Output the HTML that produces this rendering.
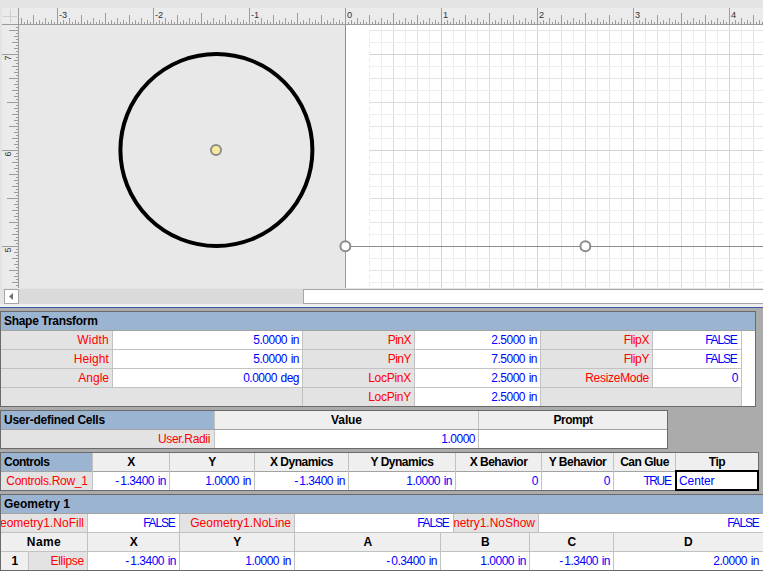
<!DOCTYPE html>
<html><head><meta charset="utf-8"><style>
html,body{margin:0;padding:0;width:763px;height:571px;overflow:hidden;background:#ababab}
#root{position:relative;width:763px;height:571px;overflow:hidden;font-family:"Liberation Sans",sans-serif}
#sheet div{position:absolute}
.t{height:18px;line-height:18px;white-space:nowrap;overflow:hidden}
.hb{font-weight:bold;font-size:12px;letter-spacing:-0.5px;color:#000}
.lb{font-size:12px;color:#ff0000}
.vb{font-size:12px;letter-spacing:-0.5px;word-spacing:0.8px;color:#0000ff}
.clip{direction:rtl}
</style></head><body><div id="root">
<svg width="763" height="308" viewBox="0 0 763 308" shape-rendering="crispEdges" style="position:absolute;left:0;top:0" font-family="Liberation Sans, sans-serif"><rect x="0" y="0" width="763" height="307" fill="#e4e4e4"/><rect x="2" y="8" width="761" height="16" fill="#ebebeb"/><rect x="2" y="25" width="16" height="263" fill="#ebebeb"/><rect x="3" y="16" width="14" height="1" fill="#cfcfcf"/><rect x="10" y="9" width="1" height="14" fill="#cfcfcf"/><rect x="2" y="24" width="761" height="1" fill="#9c9c9c"/><rect x="18" y="8" width="1" height="280" fill="#9c9c9c"/><rect x="21" y="18" width="1" height="6" fill="#9c9c9c"/><rect x="24" y="22" width="1" height="2" fill="#9c9c9c"/><rect x="27" y="20" width="1" height="4" fill="#9c9c9c"/><rect x="30" y="22" width="1" height="2" fill="#9c9c9c"/><rect x="33" y="15" width="1" height="9" fill="#9c9c9c"/><rect x="36" y="22" width="1" height="2" fill="#9c9c9c"/><rect x="39" y="20" width="1" height="4" fill="#9c9c9c"/><rect x="42" y="22" width="1" height="2" fill="#9c9c9c"/><rect x="45" y="18" width="1" height="6" fill="#9c9c9c"/><rect x="48" y="22" width="1" height="2" fill="#9c9c9c"/><rect x="51" y="20" width="1" height="4" fill="#9c9c9c"/><rect x="54" y="22" width="1" height="2" fill="#9c9c9c"/><rect x="57" y="8" width="1" height="16" fill="#9c9c9c"/><rect x="60" y="22" width="1" height="2" fill="#9c9c9c"/><rect x="63" y="20" width="1" height="4" fill="#9c9c9c"/><rect x="66" y="22" width="1" height="2" fill="#9c9c9c"/><rect x="69" y="18" width="1" height="6" fill="#9c9c9c"/><rect x="72" y="22" width="1" height="2" fill="#9c9c9c"/><rect x="75" y="20" width="1" height="4" fill="#9c9c9c"/><rect x="78" y="22" width="1" height="2" fill="#9c9c9c"/><rect x="81" y="15" width="1" height="9" fill="#9c9c9c"/><rect x="84" y="22" width="1" height="2" fill="#9c9c9c"/><rect x="87" y="20" width="1" height="4" fill="#9c9c9c"/><rect x="90" y="22" width="1" height="2" fill="#9c9c9c"/><rect x="93" y="18" width="1" height="6" fill="#9c9c9c"/><rect x="96" y="22" width="1" height="2" fill="#9c9c9c"/><rect x="99" y="20" width="1" height="4" fill="#9c9c9c"/><rect x="102" y="22" width="1" height="2" fill="#9c9c9c"/><rect x="105" y="13" width="1" height="11" fill="#9c9c9c"/><rect x="108" y="22" width="1" height="2" fill="#9c9c9c"/><rect x="111" y="20" width="1" height="4" fill="#9c9c9c"/><rect x="114" y="22" width="1" height="2" fill="#9c9c9c"/><rect x="117" y="18" width="1" height="6" fill="#9c9c9c"/><rect x="120" y="22" width="1" height="2" fill="#9c9c9c"/><rect x="123" y="20" width="1" height="4" fill="#9c9c9c"/><rect x="126" y="22" width="1" height="2" fill="#9c9c9c"/><rect x="129" y="15" width="1" height="9" fill="#9c9c9c"/><rect x="132" y="22" width="1" height="2" fill="#9c9c9c"/><rect x="135" y="20" width="1" height="4" fill="#9c9c9c"/><rect x="138" y="22" width="1" height="2" fill="#9c9c9c"/><rect x="141" y="18" width="1" height="6" fill="#9c9c9c"/><rect x="144" y="22" width="1" height="2" fill="#9c9c9c"/><rect x="147" y="20" width="1" height="4" fill="#9c9c9c"/><rect x="150" y="22" width="1" height="2" fill="#9c9c9c"/><rect x="153" y="8" width="1" height="16" fill="#9c9c9c"/><rect x="156" y="22" width="1" height="2" fill="#9c9c9c"/><rect x="159" y="20" width="1" height="4" fill="#9c9c9c"/><rect x="162" y="22" width="1" height="2" fill="#9c9c9c"/><rect x="165" y="18" width="1" height="6" fill="#9c9c9c"/><rect x="168" y="22" width="1" height="2" fill="#9c9c9c"/><rect x="171" y="20" width="1" height="4" fill="#9c9c9c"/><rect x="174" y="22" width="1" height="2" fill="#9c9c9c"/><rect x="177" y="15" width="1" height="9" fill="#9c9c9c"/><rect x="180" y="22" width="1" height="2" fill="#9c9c9c"/><rect x="183" y="20" width="1" height="4" fill="#9c9c9c"/><rect x="186" y="22" width="1" height="2" fill="#9c9c9c"/><rect x="189" y="18" width="1" height="6" fill="#9c9c9c"/><rect x="192" y="22" width="1" height="2" fill="#9c9c9c"/><rect x="195" y="20" width="1" height="4" fill="#9c9c9c"/><rect x="198" y="22" width="1" height="2" fill="#9c9c9c"/><rect x="201" y="13" width="1" height="11" fill="#9c9c9c"/><rect x="204" y="22" width="1" height="2" fill="#9c9c9c"/><rect x="207" y="20" width="1" height="4" fill="#9c9c9c"/><rect x="210" y="22" width="1" height="2" fill="#9c9c9c"/><rect x="213" y="18" width="1" height="6" fill="#9c9c9c"/><rect x="216" y="22" width="1" height="2" fill="#9c9c9c"/><rect x="219" y="20" width="1" height="4" fill="#9c9c9c"/><rect x="222" y="22" width="1" height="2" fill="#9c9c9c"/><rect x="225" y="15" width="1" height="9" fill="#9c9c9c"/><rect x="228" y="22" width="1" height="2" fill="#9c9c9c"/><rect x="231" y="20" width="1" height="4" fill="#9c9c9c"/><rect x="234" y="22" width="1" height="2" fill="#9c9c9c"/><rect x="237" y="18" width="1" height="6" fill="#9c9c9c"/><rect x="240" y="22" width="1" height="2" fill="#9c9c9c"/><rect x="243" y="20" width="1" height="4" fill="#9c9c9c"/><rect x="246" y="22" width="1" height="2" fill="#9c9c9c"/><rect x="249" y="8" width="1" height="16" fill="#9c9c9c"/><rect x="252" y="22" width="1" height="2" fill="#9c9c9c"/><rect x="255" y="20" width="1" height="4" fill="#9c9c9c"/><rect x="258" y="22" width="1" height="2" fill="#9c9c9c"/><rect x="261" y="18" width="1" height="6" fill="#9c9c9c"/><rect x="264" y="22" width="1" height="2" fill="#9c9c9c"/><rect x="267" y="20" width="1" height="4" fill="#9c9c9c"/><rect x="270" y="22" width="1" height="2" fill="#9c9c9c"/><rect x="273" y="15" width="1" height="9" fill="#9c9c9c"/><rect x="276" y="22" width="1" height="2" fill="#9c9c9c"/><rect x="279" y="20" width="1" height="4" fill="#9c9c9c"/><rect x="282" y="22" width="1" height="2" fill="#9c9c9c"/><rect x="285" y="18" width="1" height="6" fill="#9c9c9c"/><rect x="288" y="22" width="1" height="2" fill="#9c9c9c"/><rect x="291" y="20" width="1" height="4" fill="#9c9c9c"/><rect x="294" y="22" width="1" height="2" fill="#9c9c9c"/><rect x="297" y="13" width="1" height="11" fill="#9c9c9c"/><rect x="300" y="22" width="1" height="2" fill="#9c9c9c"/><rect x="303" y="20" width="1" height="4" fill="#9c9c9c"/><rect x="306" y="22" width="1" height="2" fill="#9c9c9c"/><rect x="309" y="18" width="1" height="6" fill="#9c9c9c"/><rect x="312" y="22" width="1" height="2" fill="#9c9c9c"/><rect x="315" y="20" width="1" height="4" fill="#9c9c9c"/><rect x="318" y="22" width="1" height="2" fill="#9c9c9c"/><rect x="321" y="15" width="1" height="9" fill="#9c9c9c"/><rect x="324" y="22" width="1" height="2" fill="#9c9c9c"/><rect x="327" y="20" width="1" height="4" fill="#9c9c9c"/><rect x="330" y="22" width="1" height="2" fill="#9c9c9c"/><rect x="333" y="18" width="1" height="6" fill="#9c9c9c"/><rect x="336" y="22" width="1" height="2" fill="#9c9c9c"/><rect x="339" y="20" width="1" height="4" fill="#9c9c9c"/><rect x="342" y="22" width="1" height="2" fill="#9c9c9c"/><rect x="345" y="8" width="1" height="16" fill="#9c9c9c"/><rect x="348" y="22" width="1" height="2" fill="#9c9c9c"/><rect x="351" y="20" width="1" height="4" fill="#9c9c9c"/><rect x="354" y="22" width="1" height="2" fill="#9c9c9c"/><rect x="357" y="18" width="1" height="6" fill="#9c9c9c"/><rect x="360" y="22" width="1" height="2" fill="#9c9c9c"/><rect x="363" y="20" width="1" height="4" fill="#9c9c9c"/><rect x="366" y="22" width="1" height="2" fill="#9c9c9c"/><rect x="369" y="15" width="1" height="9" fill="#9c9c9c"/><rect x="372" y="22" width="1" height="2" fill="#9c9c9c"/><rect x="375" y="20" width="1" height="4" fill="#9c9c9c"/><rect x="378" y="22" width="1" height="2" fill="#9c9c9c"/><rect x="381" y="18" width="1" height="6" fill="#9c9c9c"/><rect x="384" y="22" width="1" height="2" fill="#9c9c9c"/><rect x="387" y="20" width="1" height="4" fill="#9c9c9c"/><rect x="390" y="22" width="1" height="2" fill="#9c9c9c"/><rect x="393" y="13" width="1" height="11" fill="#9c9c9c"/><rect x="396" y="22" width="1" height="2" fill="#9c9c9c"/><rect x="399" y="20" width="1" height="4" fill="#9c9c9c"/><rect x="402" y="22" width="1" height="2" fill="#9c9c9c"/><rect x="405" y="18" width="1" height="6" fill="#9c9c9c"/><rect x="408" y="22" width="1" height="2" fill="#9c9c9c"/><rect x="411" y="20" width="1" height="4" fill="#9c9c9c"/><rect x="414" y="22" width="1" height="2" fill="#9c9c9c"/><rect x="417" y="15" width="1" height="9" fill="#9c9c9c"/><rect x="420" y="22" width="1" height="2" fill="#9c9c9c"/><rect x="423" y="20" width="1" height="4" fill="#9c9c9c"/><rect x="426" y="22" width="1" height="2" fill="#9c9c9c"/><rect x="429" y="18" width="1" height="6" fill="#9c9c9c"/><rect x="432" y="22" width="1" height="2" fill="#9c9c9c"/><rect x="435" y="20" width="1" height="4" fill="#9c9c9c"/><rect x="438" y="22" width="1" height="2" fill="#9c9c9c"/><rect x="441" y="8" width="1" height="16" fill="#9c9c9c"/><rect x="444" y="22" width="1" height="2" fill="#9c9c9c"/><rect x="447" y="20" width="1" height="4" fill="#9c9c9c"/><rect x="450" y="22" width="1" height="2" fill="#9c9c9c"/><rect x="453" y="18" width="1" height="6" fill="#9c9c9c"/><rect x="456" y="22" width="1" height="2" fill="#9c9c9c"/><rect x="459" y="20" width="1" height="4" fill="#9c9c9c"/><rect x="462" y="22" width="1" height="2" fill="#9c9c9c"/><rect x="465" y="15" width="1" height="9" fill="#9c9c9c"/><rect x="468" y="22" width="1" height="2" fill="#9c9c9c"/><rect x="471" y="20" width="1" height="4" fill="#9c9c9c"/><rect x="474" y="22" width="1" height="2" fill="#9c9c9c"/><rect x="477" y="18" width="1" height="6" fill="#9c9c9c"/><rect x="480" y="22" width="1" height="2" fill="#9c9c9c"/><rect x="483" y="20" width="1" height="4" fill="#9c9c9c"/><rect x="486" y="22" width="1" height="2" fill="#9c9c9c"/><rect x="489" y="13" width="1" height="11" fill="#9c9c9c"/><rect x="492" y="22" width="1" height="2" fill="#9c9c9c"/><rect x="495" y="20" width="1" height="4" fill="#9c9c9c"/><rect x="498" y="22" width="1" height="2" fill="#9c9c9c"/><rect x="501" y="18" width="1" height="6" fill="#9c9c9c"/><rect x="504" y="22" width="1" height="2" fill="#9c9c9c"/><rect x="507" y="20" width="1" height="4" fill="#9c9c9c"/><rect x="510" y="22" width="1" height="2" fill="#9c9c9c"/><rect x="513" y="15" width="1" height="9" fill="#9c9c9c"/><rect x="516" y="22" width="1" height="2" fill="#9c9c9c"/><rect x="519" y="20" width="1" height="4" fill="#9c9c9c"/><rect x="522" y="22" width="1" height="2" fill="#9c9c9c"/><rect x="525" y="18" width="1" height="6" fill="#9c9c9c"/><rect x="528" y="22" width="1" height="2" fill="#9c9c9c"/><rect x="531" y="20" width="1" height="4" fill="#9c9c9c"/><rect x="534" y="22" width="1" height="2" fill="#9c9c9c"/><rect x="537" y="8" width="1" height="16" fill="#9c9c9c"/><rect x="540" y="22" width="1" height="2" fill="#9c9c9c"/><rect x="543" y="20" width="1" height="4" fill="#9c9c9c"/><rect x="546" y="22" width="1" height="2" fill="#9c9c9c"/><rect x="549" y="18" width="1" height="6" fill="#9c9c9c"/><rect x="552" y="22" width="1" height="2" fill="#9c9c9c"/><rect x="555" y="20" width="1" height="4" fill="#9c9c9c"/><rect x="558" y="22" width="1" height="2" fill="#9c9c9c"/><rect x="561" y="15" width="1" height="9" fill="#9c9c9c"/><rect x="564" y="22" width="1" height="2" fill="#9c9c9c"/><rect x="567" y="20" width="1" height="4" fill="#9c9c9c"/><rect x="570" y="22" width="1" height="2" fill="#9c9c9c"/><rect x="573" y="18" width="1" height="6" fill="#9c9c9c"/><rect x="576" y="22" width="1" height="2" fill="#9c9c9c"/><rect x="579" y="20" width="1" height="4" fill="#9c9c9c"/><rect x="582" y="22" width="1" height="2" fill="#9c9c9c"/><rect x="585" y="13" width="1" height="11" fill="#9c9c9c"/><rect x="588" y="22" width="1" height="2" fill="#9c9c9c"/><rect x="591" y="20" width="1" height="4" fill="#9c9c9c"/><rect x="594" y="22" width="1" height="2" fill="#9c9c9c"/><rect x="597" y="18" width="1" height="6" fill="#9c9c9c"/><rect x="600" y="22" width="1" height="2" fill="#9c9c9c"/><rect x="603" y="20" width="1" height="4" fill="#9c9c9c"/><rect x="606" y="22" width="1" height="2" fill="#9c9c9c"/><rect x="609" y="15" width="1" height="9" fill="#9c9c9c"/><rect x="612" y="22" width="1" height="2" fill="#9c9c9c"/><rect x="615" y="20" width="1" height="4" fill="#9c9c9c"/><rect x="618" y="22" width="1" height="2" fill="#9c9c9c"/><rect x="621" y="18" width="1" height="6" fill="#9c9c9c"/><rect x="624" y="22" width="1" height="2" fill="#9c9c9c"/><rect x="627" y="20" width="1" height="4" fill="#9c9c9c"/><rect x="630" y="22" width="1" height="2" fill="#9c9c9c"/><rect x="633" y="8" width="1" height="16" fill="#9c9c9c"/><rect x="636" y="22" width="1" height="2" fill="#9c9c9c"/><rect x="639" y="20" width="1" height="4" fill="#9c9c9c"/><rect x="642" y="22" width="1" height="2" fill="#9c9c9c"/><rect x="645" y="18" width="1" height="6" fill="#9c9c9c"/><rect x="648" y="22" width="1" height="2" fill="#9c9c9c"/><rect x="651" y="20" width="1" height="4" fill="#9c9c9c"/><rect x="654" y="22" width="1" height="2" fill="#9c9c9c"/><rect x="657" y="15" width="1" height="9" fill="#9c9c9c"/><rect x="660" y="22" width="1" height="2" fill="#9c9c9c"/><rect x="663" y="20" width="1" height="4" fill="#9c9c9c"/><rect x="666" y="22" width="1" height="2" fill="#9c9c9c"/><rect x="669" y="18" width="1" height="6" fill="#9c9c9c"/><rect x="672" y="22" width="1" height="2" fill="#9c9c9c"/><rect x="675" y="20" width="1" height="4" fill="#9c9c9c"/><rect x="678" y="22" width="1" height="2" fill="#9c9c9c"/><rect x="681" y="13" width="1" height="11" fill="#9c9c9c"/><rect x="684" y="22" width="1" height="2" fill="#9c9c9c"/><rect x="687" y="20" width="1" height="4" fill="#9c9c9c"/><rect x="690" y="22" width="1" height="2" fill="#9c9c9c"/><rect x="693" y="18" width="1" height="6" fill="#9c9c9c"/><rect x="696" y="22" width="1" height="2" fill="#9c9c9c"/><rect x="699" y="20" width="1" height="4" fill="#9c9c9c"/><rect x="702" y="22" width="1" height="2" fill="#9c9c9c"/><rect x="705" y="15" width="1" height="9" fill="#9c9c9c"/><rect x="708" y="22" width="1" height="2" fill="#9c9c9c"/><rect x="711" y="20" width="1" height="4" fill="#9c9c9c"/><rect x="714" y="22" width="1" height="2" fill="#9c9c9c"/><rect x="717" y="18" width="1" height="6" fill="#9c9c9c"/><rect x="720" y="22" width="1" height="2" fill="#9c9c9c"/><rect x="723" y="20" width="1" height="4" fill="#9c9c9c"/><rect x="726" y="22" width="1" height="2" fill="#9c9c9c"/><rect x="729" y="8" width="1" height="16" fill="#9c9c9c"/><rect x="732" y="22" width="1" height="2" fill="#9c9c9c"/><rect x="735" y="20" width="1" height="4" fill="#9c9c9c"/><rect x="738" y="22" width="1" height="2" fill="#9c9c9c"/><rect x="741" y="18" width="1" height="6" fill="#9c9c9c"/><rect x="744" y="22" width="1" height="2" fill="#9c9c9c"/><rect x="747" y="20" width="1" height="4" fill="#9c9c9c"/><rect x="750" y="22" width="1" height="2" fill="#9c9c9c"/><rect x="753" y="15" width="1" height="9" fill="#9c9c9c"/><rect x="756" y="22" width="1" height="2" fill="#9c9c9c"/><rect x="759" y="20" width="1" height="4" fill="#9c9c9c"/><rect x="762" y="22" width="1" height="2" fill="#9c9c9c"/><rect x="16" y="27" width="2" height="1" fill="#9c9c9c"/><rect x="9" y="30" width="9" height="1" fill="#9c9c9c"/><rect x="16" y="33" width="2" height="1" fill="#9c9c9c"/><rect x="14" y="36" width="4" height="1" fill="#9c9c9c"/><rect x="16" y="39" width="2" height="1" fill="#9c9c9c"/><rect x="12" y="42" width="6" height="1" fill="#9c9c9c"/><rect x="16" y="45" width="2" height="1" fill="#9c9c9c"/><rect x="14" y="48" width="4" height="1" fill="#9c9c9c"/><rect x="16" y="51" width="2" height="1" fill="#9c9c9c"/><rect x="2" y="54" width="16" height="1" fill="#9c9c9c"/><rect x="16" y="57" width="2" height="1" fill="#9c9c9c"/><rect x="14" y="60" width="4" height="1" fill="#9c9c9c"/><rect x="16" y="63" width="2" height="1" fill="#9c9c9c"/><rect x="12" y="66" width="6" height="1" fill="#9c9c9c"/><rect x="16" y="69" width="2" height="1" fill="#9c9c9c"/><rect x="14" y="72" width="4" height="1" fill="#9c9c9c"/><rect x="16" y="75" width="2" height="1" fill="#9c9c9c"/><rect x="9" y="78" width="9" height="1" fill="#9c9c9c"/><rect x="16" y="81" width="2" height="1" fill="#9c9c9c"/><rect x="14" y="84" width="4" height="1" fill="#9c9c9c"/><rect x="16" y="87" width="2" height="1" fill="#9c9c9c"/><rect x="12" y="90" width="6" height="1" fill="#9c9c9c"/><rect x="16" y="93" width="2" height="1" fill="#9c9c9c"/><rect x="14" y="96" width="4" height="1" fill="#9c9c9c"/><rect x="16" y="99" width="2" height="1" fill="#9c9c9c"/><rect x="7" y="102" width="11" height="1" fill="#9c9c9c"/><rect x="16" y="105" width="2" height="1" fill="#9c9c9c"/><rect x="14" y="108" width="4" height="1" fill="#9c9c9c"/><rect x="16" y="111" width="2" height="1" fill="#9c9c9c"/><rect x="12" y="114" width="6" height="1" fill="#9c9c9c"/><rect x="16" y="117" width="2" height="1" fill="#9c9c9c"/><rect x="14" y="120" width="4" height="1" fill="#9c9c9c"/><rect x="16" y="123" width="2" height="1" fill="#9c9c9c"/><rect x="9" y="126" width="9" height="1" fill="#9c9c9c"/><rect x="16" y="129" width="2" height="1" fill="#9c9c9c"/><rect x="14" y="132" width="4" height="1" fill="#9c9c9c"/><rect x="16" y="135" width="2" height="1" fill="#9c9c9c"/><rect x="12" y="138" width="6" height="1" fill="#9c9c9c"/><rect x="16" y="141" width="2" height="1" fill="#9c9c9c"/><rect x="14" y="144" width="4" height="1" fill="#9c9c9c"/><rect x="16" y="147" width="2" height="1" fill="#9c9c9c"/><rect x="2" y="150" width="16" height="1" fill="#9c9c9c"/><rect x="16" y="153" width="2" height="1" fill="#9c9c9c"/><rect x="14" y="156" width="4" height="1" fill="#9c9c9c"/><rect x="16" y="159" width="2" height="1" fill="#9c9c9c"/><rect x="12" y="162" width="6" height="1" fill="#9c9c9c"/><rect x="16" y="165" width="2" height="1" fill="#9c9c9c"/><rect x="14" y="168" width="4" height="1" fill="#9c9c9c"/><rect x="16" y="171" width="2" height="1" fill="#9c9c9c"/><rect x="9" y="174" width="9" height="1" fill="#9c9c9c"/><rect x="16" y="177" width="2" height="1" fill="#9c9c9c"/><rect x="14" y="180" width="4" height="1" fill="#9c9c9c"/><rect x="16" y="183" width="2" height="1" fill="#9c9c9c"/><rect x="12" y="186" width="6" height="1" fill="#9c9c9c"/><rect x="16" y="189" width="2" height="1" fill="#9c9c9c"/><rect x="14" y="192" width="4" height="1" fill="#9c9c9c"/><rect x="16" y="195" width="2" height="1" fill="#9c9c9c"/><rect x="7" y="198" width="11" height="1" fill="#9c9c9c"/><rect x="16" y="201" width="2" height="1" fill="#9c9c9c"/><rect x="14" y="204" width="4" height="1" fill="#9c9c9c"/><rect x="16" y="207" width="2" height="1" fill="#9c9c9c"/><rect x="12" y="210" width="6" height="1" fill="#9c9c9c"/><rect x="16" y="213" width="2" height="1" fill="#9c9c9c"/><rect x="14" y="216" width="4" height="1" fill="#9c9c9c"/><rect x="16" y="219" width="2" height="1" fill="#9c9c9c"/><rect x="9" y="222" width="9" height="1" fill="#9c9c9c"/><rect x="16" y="225" width="2" height="1" fill="#9c9c9c"/><rect x="14" y="228" width="4" height="1" fill="#9c9c9c"/><rect x="16" y="231" width="2" height="1" fill="#9c9c9c"/><rect x="12" y="234" width="6" height="1" fill="#9c9c9c"/><rect x="16" y="237" width="2" height="1" fill="#9c9c9c"/><rect x="14" y="240" width="4" height="1" fill="#9c9c9c"/><rect x="16" y="243" width="2" height="1" fill="#9c9c9c"/><rect x="2" y="246" width="16" height="1" fill="#9c9c9c"/><rect x="16" y="249" width="2" height="1" fill="#9c9c9c"/><rect x="14" y="252" width="4" height="1" fill="#9c9c9c"/><rect x="16" y="255" width="2" height="1" fill="#9c9c9c"/><rect x="12" y="258" width="6" height="1" fill="#9c9c9c"/><rect x="16" y="261" width="2" height="1" fill="#9c9c9c"/><rect x="14" y="264" width="4" height="1" fill="#9c9c9c"/><rect x="16" y="267" width="2" height="1" fill="#9c9c9c"/><rect x="9" y="270" width="9" height="1" fill="#9c9c9c"/><rect x="16" y="273" width="2" height="1" fill="#9c9c9c"/><rect x="14" y="276" width="4" height="1" fill="#9c9c9c"/><rect x="16" y="279" width="2" height="1" fill="#9c9c9c"/><rect x="12" y="282" width="6" height="1" fill="#9c9c9c"/><rect x="16" y="285" width="2" height="1" fill="#9c9c9c"/><rect x="19" y="25" width="326" height="263" fill="#e8e8e8"/><rect x="346" y="25" width="417" height="263" fill="#ffffff"/><rect x="381" y="25" width="1" height="263" fill="#eeeeee"/><rect x="393" y="25" width="1" height="263" fill="#dcdcdc"/><rect x="405" y="25" width="1" height="263" fill="#eeeeee"/><rect x="417" y="25" width="1" height="263" fill="#e4e4e4"/><rect x="429" y="25" width="1" height="263" fill="#eeeeee"/><rect x="441" y="25" width="1" height="263" fill="#d4d4d4"/><rect x="453" y="25" width="1" height="263" fill="#eeeeee"/><rect x="465" y="25" width="1" height="263" fill="#e4e4e4"/><rect x="477" y="25" width="1" height="263" fill="#eeeeee"/><rect x="489" y="25" width="1" height="263" fill="#dcdcdc"/><rect x="501" y="25" width="1" height="263" fill="#eeeeee"/><rect x="513" y="25" width="1" height="263" fill="#e4e4e4"/><rect x="525" y="25" width="1" height="263" fill="#eeeeee"/><rect x="537" y="25" width="1" height="263" fill="#d4d4d4"/><rect x="549" y="25" width="1" height="263" fill="#eeeeee"/><rect x="561" y="25" width="1" height="263" fill="#e4e4e4"/><rect x="573" y="25" width="1" height="263" fill="#eeeeee"/><rect x="585" y="25" width="1" height="263" fill="#dcdcdc"/><rect x="597" y="25" width="1" height="263" fill="#eeeeee"/><rect x="609" y="25" width="1" height="263" fill="#e4e4e4"/><rect x="621" y="25" width="1" height="263" fill="#eeeeee"/><rect x="633" y="25" width="1" height="263" fill="#d4d4d4"/><rect x="645" y="25" width="1" height="263" fill="#eeeeee"/><rect x="657" y="25" width="1" height="263" fill="#e4e4e4"/><rect x="669" y="25" width="1" height="263" fill="#eeeeee"/><rect x="681" y="25" width="1" height="263" fill="#dcdcdc"/><rect x="693" y="25" width="1" height="263" fill="#eeeeee"/><rect x="705" y="25" width="1" height="263" fill="#e4e4e4"/><rect x="717" y="25" width="1" height="263" fill="#eeeeee"/><rect x="729" y="25" width="1" height="263" fill="#d4d4d4"/><rect x="741" y="25" width="1" height="263" fill="#eeeeee"/><rect x="753" y="25" width="1" height="263" fill="#e4e4e4"/><rect x="369" y="30" width="394" height="1" fill="#e4e4e4"/><rect x="369" y="42" width="394" height="1" fill="#eeeeee"/><rect x="369" y="54" width="394" height="1" fill="#d4d4d4"/><rect x="369" y="66" width="394" height="1" fill="#eeeeee"/><rect x="369" y="78" width="394" height="1" fill="#e4e4e4"/><rect x="369" y="90" width="394" height="1" fill="#eeeeee"/><rect x="369" y="102" width="394" height="1" fill="#dcdcdc"/><rect x="369" y="114" width="394" height="1" fill="#eeeeee"/><rect x="369" y="126" width="394" height="1" fill="#e4e4e4"/><rect x="369" y="138" width="394" height="1" fill="#eeeeee"/><rect x="369" y="150" width="394" height="1" fill="#d4d4d4"/><rect x="369" y="162" width="394" height="1" fill="#eeeeee"/><rect x="369" y="174" width="394" height="1" fill="#e4e4e4"/><rect x="369" y="186" width="394" height="1" fill="#eeeeee"/><rect x="369" y="198" width="394" height="1" fill="#dcdcdc"/><rect x="369" y="210" width="394" height="1" fill="#eeeeee"/><rect x="369" y="222" width="394" height="1" fill="#e4e4e4"/><rect x="369" y="234" width="394" height="1" fill="#eeeeee"/><rect x="369" y="246" width="394" height="1" fill="#d4d4d4"/><rect x="369" y="258" width="394" height="1" fill="#eeeeee"/><rect x="369" y="270" width="394" height="1" fill="#e4e4e4"/><rect x="369" y="282" width="394" height="1" fill="#eeeeee"/><rect x="369" y="25" width="1" height="2" fill="#ebebeb"/><rect x="369" y="30" width="1" height="4" fill="#ebebeb"/><rect x="369" y="37" width="1" height="4" fill="#ebebeb"/><rect x="369" y="44" width="1" height="4" fill="#ebebeb"/><rect x="369" y="51" width="1" height="4" fill="#ebebeb"/><rect x="369" y="58" width="1" height="4" fill="#ebebeb"/><rect x="369" y="65" width="1" height="4" fill="#ebebeb"/><rect x="369" y="72" width="1" height="4" fill="#ebebeb"/><rect x="369" y="79" width="1" height="4" fill="#ebebeb"/><rect x="369" y="86" width="1" height="4" fill="#ebebeb"/><rect x="369" y="93" width="1" height="4" fill="#ebebeb"/><rect x="369" y="100" width="1" height="4" fill="#ebebeb"/><rect x="369" y="107" width="1" height="4" fill="#ebebeb"/><rect x="369" y="114" width="1" height="4" fill="#ebebeb"/><rect x="369" y="121" width="1" height="4" fill="#ebebeb"/><rect x="369" y="128" width="1" height="4" fill="#ebebeb"/><rect x="369" y="135" width="1" height="4" fill="#ebebeb"/><rect x="369" y="142" width="1" height="4" fill="#ebebeb"/><rect x="369" y="149" width="1" height="4" fill="#ebebeb"/><rect x="369" y="156" width="1" height="4" fill="#ebebeb"/><rect x="369" y="163" width="1" height="4" fill="#ebebeb"/><rect x="369" y="170" width="1" height="4" fill="#ebebeb"/><rect x="369" y="177" width="1" height="4" fill="#ebebeb"/><rect x="369" y="184" width="1" height="4" fill="#ebebeb"/><rect x="369" y="191" width="1" height="4" fill="#ebebeb"/><rect x="369" y="198" width="1" height="4" fill="#ebebeb"/><rect x="369" y="205" width="1" height="4" fill="#ebebeb"/><rect x="369" y="212" width="1" height="4" fill="#ebebeb"/><rect x="369" y="219" width="1" height="4" fill="#ebebeb"/><rect x="369" y="226" width="1" height="4" fill="#ebebeb"/><rect x="369" y="233" width="1" height="4" fill="#ebebeb"/><rect x="369" y="240" width="1" height="4" fill="#ebebeb"/><rect x="369" y="247" width="1" height="4" fill="#ebebeb"/><rect x="369" y="254" width="1" height="4" fill="#ebebeb"/><rect x="369" y="261" width="1" height="4" fill="#ebebeb"/><rect x="369" y="268" width="1" height="4" fill="#ebebeb"/><rect x="369" y="275" width="1" height="4" fill="#ebebeb"/><rect x="369" y="282" width="1" height="4" fill="#ebebeb"/><rect x="345" y="25" width="1" height="263" fill="#8c8c8c"/><text shape-rendering="geometricPrecision" transform="translate(59,18)" font-size="9.2" fill="#333">-3</text><text shape-rendering="geometricPrecision" transform="translate(155,18)" font-size="9.2" fill="#333">-2</text><text shape-rendering="geometricPrecision" transform="translate(251,18)" font-size="9.2" fill="#333">-1</text><text shape-rendering="geometricPrecision" transform="translate(347,18)" font-size="9.2" fill="#333">0</text><text shape-rendering="geometricPrecision" transform="translate(443,18)" font-size="9.2" fill="#333">1</text><text shape-rendering="geometricPrecision" transform="translate(539,18)" font-size="9.2" fill="#333">2</text><text shape-rendering="geometricPrecision" transform="translate(635,18)" font-size="9.2" fill="#333">3</text><text shape-rendering="geometricPrecision" transform="translate(731,18)" font-size="9.2" fill="#333">4</text><text shape-rendering="geometricPrecision" transform="translate(11,55.5) rotate(-90) scale(0.92,1)" x="0" y="0" text-anchor="end" font-size="9.6" fill="#333">7</text><text shape-rendering="geometricPrecision" transform="translate(11,151.5) rotate(-90) scale(0.92,1)" x="0" y="0" text-anchor="end" font-size="9.6" fill="#333">6</text><text shape-rendering="geometricPrecision" transform="translate(11,247.5) rotate(-90) scale(0.92,1)" x="0" y="0" text-anchor="end" font-size="9.6" fill="#333">5</text><rect x="346" y="246" width="417" height="1" fill="#8c8c8c"/><rect x="345" y="252" width="1" height="36" fill="#959dab"/><circle shape-rendering="geometricPrecision" cx="345.4" cy="246.3" r="4.95" fill="#fff" stroke="#8c8c8c" stroke-width="2"/><circle shape-rendering="geometricPrecision" cx="585.4" cy="246.3" r="4.95" fill="#fff" stroke="#8c8c8c" stroke-width="2"/><circle shape-rendering="geometricPrecision" cx="216.4" cy="150" r="96" fill="none" stroke="#000" stroke-width="4"/><circle shape-rendering="geometricPrecision" cx="216" cy="150" r="5" fill="#f9ea9c" stroke="#8c8c8c" stroke-width="2"/><rect x="0" y="288" width="763" height="16" fill="#e4e4e4"/><rect x="19" y="289" width="284" height="15" fill="#dadada"/><rect x="4" y="289" width="15" height="15" fill="#a6a6a6"/><rect x="5" y="290" width="13" height="13" fill="#ffffff"/><polygon shape-rendering="geometricPrecision" points="9,296.5 13,293 13,300" fill="#6e6e6e"/><rect x="303" y="289" width="460" height="15" fill="#a6a6a6"/><rect x="304" y="290" width="459" height="13" fill="#ffffff"/><rect x="0" y="304" width="763" height="3" fill="#efefef"/><rect x="0" y="307" width="763" height="1" fill="#3d58a3"/></svg>
<div id="sheet">
<div style="left:0px;top:308px;width:763px;height:263px;background:#ababab;"></div><div style="left:0px;top:311px;width:756px;height:96px;background:#6a6a6a;"></div><div style="left:1px;top:312px;width:754px;height:94px;background:#ffffff;"></div><div style="left:1px;top:312px;width:754px;height:18px;background:#9bb4d2;"></div><div style="left:1px;top:330px;width:754px;height:1px;background:#a2a2a2;"></div><div class="t hb" style="left:1px;top:312px;width:300px;padding-left:3px;text-align:left;box-sizing:border-box;letter-spacing:-0.3px">Shape Transform</div><div style="left:1px;top:331px;width:111px;height:18px;background:#e3e3e3;"></div><div style="left:303px;top:331px;width:111px;height:18px;background:#e3e3e3;"></div><div style="left:541px;top:331px;width:111px;height:18px;background:#e3e3e3;"></div><div style="left:1px;top:349px;width:741px;height:1px;background:#c2c2c2;"></div><div style="left:1px;top:350px;width:111px;height:18px;background:#e3e3e3;"></div><div style="left:303px;top:350px;width:111px;height:18px;background:#e3e3e3;"></div><div style="left:541px;top:350px;width:111px;height:18px;background:#e3e3e3;"></div><div style="left:1px;top:368px;width:741px;height:1px;background:#c2c2c2;"></div><div style="left:1px;top:369px;width:111px;height:18px;background:#e3e3e3;"></div><div style="left:303px;top:369px;width:111px;height:18px;background:#e3e3e3;"></div><div style="left:541px;top:369px;width:111px;height:18px;background:#e3e3e3;"></div><div style="left:1px;top:387px;width:741px;height:1px;background:#c2c2c2;"></div><div style="left:1px;top:388px;width:111px;height:18px;background:#e3e3e3;"></div><div style="left:303px;top:388px;width:111px;height:18px;background:#e3e3e3;"></div><div style="left:541px;top:388px;width:111px;height:18px;background:#e3e3e3;"></div><div style="left:112px;top:331px;width:1px;height:75px;background:#c2c2c2;"></div><div style="left:302px;top:331px;width:1px;height:75px;background:#c2c2c2;"></div><div style="left:414px;top:331px;width:1px;height:75px;background:#c2c2c2;"></div><div style="left:540px;top:331px;width:1px;height:75px;background:#c2c2c2;"></div><div style="left:652px;top:331px;width:1px;height:75px;background:#c2c2c2;"></div><div style="left:741px;top:331px;width:1px;height:75px;background:#c2c2c2;"></div><div style="left:1px;top:388px;width:301px;height:18px;background:#e3e3e3;"></div><div style="left:541px;top:388px;width:200px;height:18px;background:#e3e3e3;"></div><div class="t lb" style="left:1px;top:331px;width:111px;padding-right:3px;text-align:right;box-sizing:border-box;letter-spacing:0.2px">Width</div><div class="t vb" style="left:113px;top:331px;width:189px;padding-right:3px;text-align:right;box-sizing:border-box;">5.0000 in</div><div class="t lb" style="left:303px;top:331px;width:111px;padding-right:3px;text-align:right;box-sizing:border-box;letter-spacing:-0.5px">PinX</div><div class="t vb" style="left:415px;top:331px;width:125px;padding-right:3px;text-align:right;box-sizing:border-box;">2.5000 in</div><div class="t lb" style="left:541px;top:331px;width:111px;padding-right:3px;text-align:right;box-sizing:border-box;letter-spacing:-0.4px">FlipX</div><div class="t vb" style="left:653px;top:331px;width:88px;padding-right:4.5px;text-align:right;box-sizing:border-box;letter-spacing:-1.2px">FALSE</div><div class="t lb" style="left:1px;top:350px;width:111px;padding-right:3px;text-align:right;box-sizing:border-box;letter-spacing:0.1px">Height</div><div class="t vb" style="left:113px;top:350px;width:189px;padding-right:3px;text-align:right;box-sizing:border-box;">5.0000 in</div><div class="t lb" style="left:303px;top:350px;width:111px;padding-right:3px;text-align:right;box-sizing:border-box;letter-spacing:-0.5px">PinY</div><div class="t vb" style="left:415px;top:350px;width:125px;padding-right:3px;text-align:right;box-sizing:border-box;">7.5000 in</div><div class="t lb" style="left:541px;top:350px;width:111px;padding-right:3px;text-align:right;box-sizing:border-box;letter-spacing:-0.4px">FlipY</div><div class="t vb" style="left:653px;top:350px;width:88px;padding-right:4.5px;text-align:right;box-sizing:border-box;letter-spacing:-1.2px">FALSE</div><div class="t lb" style="left:1px;top:369px;width:111px;padding-right:3px;text-align:right;box-sizing:border-box;">Angle</div><div class="t vb" style="left:113px;top:369px;width:189px;padding-right:3px;text-align:right;box-sizing:border-box;">0.0000 deg</div><div class="t lb" style="left:303px;top:369px;width:111px;padding-right:3px;text-align:right;box-sizing:border-box;letter-spacing:-0.27px">LocPinX</div><div class="t vb" style="left:415px;top:369px;width:125px;padding-right:3px;text-align:right;box-sizing:border-box;">2.5000 in</div><div class="t lb" style="left:541px;top:369px;width:111px;padding-right:3px;text-align:right;box-sizing:border-box;letter-spacing:-0.29px">ResizeMode</div><div class="t vb" style="left:653px;top:369px;width:88px;padding-right:3px;text-align:right;box-sizing:border-box;">0</div><div class="t lb" style="left:303px;top:388px;width:111px;padding-right:3px;text-align:right;box-sizing:border-box;letter-spacing:-0.27px">LocPinY</div><div class="t vb" style="left:415px;top:388px;width:125px;padding-right:3px;text-align:right;box-sizing:border-box;">2.5000 in</div><div style="left:0px;top:410px;width:668px;height:39px;background:#6a6a6a;"></div><div style="left:1px;top:411px;width:666px;height:37px;background:#ffffff;"></div><div style="left:1px;top:411px;width:213px;height:18px;background:#9bb4d2;"></div><div style="left:215px;top:411px;width:452px;height:18px;background:#efefef;"></div><div style="left:214px;top:411px;width:1px;height:37px;background:#c2c2c2;"></div><div style="left:478px;top:411px;width:1px;height:37px;background:#c2c2c2;"></div><div style="left:1px;top:429px;width:666px;height:1px;background:#a2a2a2;"></div><div class="t hb" style="left:1px;top:411px;width:213px;padding-left:3px;text-align:left;box-sizing:border-box;letter-spacing:-0.25px">User-defined Cells</div><div class="t hb" style="left:215px;top:411px;width:263px;text-align:center;box-sizing:border-box;letter-spacing:-0.1px">Value</div><div class="t hb" style="left:479px;top:411px;width:188px;text-align:center;box-sizing:border-box;">Prompt</div><div style="left:1px;top:430px;width:213px;height:18px;background:#e3e3e3;"></div><div class="t lb" style="left:1px;top:430px;width:213px;padding-right:4px;text-align:right;box-sizing:border-box;letter-spacing:-0.33px">User.Radii</div><div class="t vb" style="left:215px;top:430px;width:263px;padding-right:3px;text-align:right;box-sizing:border-box;">1.0000</div><div style="left:0px;top:452px;width:759px;height:39px;background:#6a6a6a;"></div><div style="left:1px;top:453px;width:757px;height:37px;background:#ffffff;"></div><div style="left:1px;top:453px;width:91px;height:18px;background:#9bb4d2;"></div><div style="left:93px;top:453px;width:665px;height:18px;background:#efefef;"></div><div style="left:1px;top:471px;width:757px;height:1px;background:#a2a2a2;"></div><div style="left:92px;top:453px;width:1px;height:37px;background:#c2c2c2;"></div><div style="left:169px;top:453px;width:1px;height:37px;background:#c2c2c2;"></div><div style="left:254px;top:453px;width:1px;height:37px;background:#c2c2c2;"></div><div style="left:348px;top:453px;width:1px;height:37px;background:#c2c2c2;"></div><div style="left:455px;top:453px;width:1px;height:37px;background:#c2c2c2;"></div><div style="left:541px;top:453px;width:1px;height:37px;background:#c2c2c2;"></div><div style="left:613px;top:453px;width:1px;height:37px;background:#c2c2c2;"></div><div style="left:675px;top:453px;width:1px;height:37px;background:#c2c2c2;"></div><div class="t hb" style="left:1px;top:453px;width:91px;padding-left:3px;text-align:left;box-sizing:border-box;">Controls</div><div class="t hb" style="left:93px;top:453px;width:76px;text-align:center;box-sizing:border-box;">X</div><div class="t hb" style="left:170px;top:453px;width:84px;text-align:center;box-sizing:border-box;">Y</div><div class="t hb" style="left:255px;top:453px;width:93px;text-align:center;box-sizing:border-box;">X Dynamics</div><div class="t hb" style="left:349px;top:453px;width:106px;text-align:center;box-sizing:border-box;">Y Dynamics</div><div class="t hb" style="left:456px;top:453px;width:85px;text-align:center;box-sizing:border-box;">X Behavior</div><div class="t hb" style="left:542px;top:453px;width:71px;text-align:center;box-sizing:border-box;">Y Behavior</div><div class="t hb" style="left:614px;top:453px;width:61px;text-align:center;box-sizing:border-box;">Can Glue</div><div class="t hb" style="left:676px;top:453px;width:82px;text-align:center;box-sizing:border-box;">Tip</div><div style="left:1px;top:472px;width:91px;height:18px;background:#e3e3e3;"></div><div class="t lb" style="left:1px;top:472px;width:91px;padding-right:4.5px;text-align:right;box-sizing:border-box;letter-spacing:-0.3px">Controls.Row_1</div><div class="t vb" style="left:93px;top:472px;width:76px;padding-right:3px;text-align:right;box-sizing:border-box;"><span style="letter-spacing:1px">-</span>1.3400 in</div><div class="t vb" style="left:170px;top:472px;width:84px;padding-right:3px;text-align:right;box-sizing:border-box;">1.0000 in</div><div class="t vb" style="left:255px;top:472px;width:93px;padding-right:3px;text-align:right;box-sizing:border-box;"><span style="letter-spacing:1px">-</span>1.3400 in</div><div class="t vb" style="left:349px;top:472px;width:106px;padding-right:3px;text-align:right;box-sizing:border-box;">1.0000 in</div><div class="t vb" style="left:456px;top:472px;width:85px;padding-right:3px;text-align:right;box-sizing:border-box;">0</div><div class="t vb" style="left:542px;top:472px;width:71px;padding-right:3px;text-align:right;box-sizing:border-box;">0</div><div class="t vb" style="left:614px;top:472px;width:61px;padding-right:4.5px;text-align:right;box-sizing:border-box;letter-spacing:-1.4px">TRUE</div><div style="left:675px;top:470px;width:80px;height:17px;border:2px solid #000;background:#fff"></div><div class="t vb" style="left:677px;top:472px;width:81px;padding-left:2px;text-align:left;box-sizing:border-box;letter-spacing:-0.1px">Center</div><div style="left:0px;top:494px;width:763px;height:77px;background:#6a6a6a;"></div><div style="left:1px;top:495px;width:762px;height:75px;background:#ffffff;"></div><div style="left:1px;top:495px;width:762px;height:18px;background:#9bb4d2;"></div><div style="left:1px;top:513px;width:762px;height:1px;background:#a2a2a2;"></div><div class="t hb" style="left:1px;top:495px;width:400px;padding-left:3px;text-align:left;box-sizing:border-box;letter-spacing:0px">Geometry 1</div><div style="left:1px;top:514px;width:86px;height:18px;background:#e3e3e3;"></div><div style="left:180px;top:514px;width:114px;height:18px;background:#e3e3e3;"></div><div style="left:454px;top:514px;width:84px;height:18px;background:#e3e3e3;"></div><div style="left:87px;top:514px;width:1px;height:18px;background:#c2c2c2;"></div><div style="left:179px;top:514px;width:1px;height:18px;background:#c2c2c2;"></div><div style="left:294px;top:514px;width:1px;height:18px;background:#c2c2c2;"></div><div style="left:453px;top:514px;width:1px;height:18px;background:#c2c2c2;"></div><div style="left:538px;top:514px;width:1px;height:18px;background:#c2c2c2;"></div><div style="left:1px;top:532px;width:762px;height:1px;background:#c2c2c2;"></div><div class="t lb clip" style="left:1px;top:514px;width:86px;padding-right:3px;text-align:right;box-sizing:border-box;">Geometry1.NoFill</div><div class="t vb" style="left:88px;top:514px;width:91px;padding-right:4.5px;text-align:right;box-sizing:border-box;letter-spacing:-1.2px">FALSE</div><div class="t lb clip" style="left:180px;top:514px;width:114px;padding-right:3px;text-align:right;box-sizing:border-box;">Geometry1.NoLine</div><div class="t vb" style="left:295px;top:514px;width:158px;padding-right:4.5px;text-align:right;box-sizing:border-box;letter-spacing:-1.2px">FALSE</div><div class="t lb clip" style="left:454px;top:514px;width:84px;padding-right:3px;text-align:right;box-sizing:border-box;">Geometry1.NoShow</div><div class="t vb" style="left:539px;top:514px;width:224px;padding-right:4.5px;text-align:right;box-sizing:border-box;letter-spacing:-1.2px">FALSE</div><div style="left:1px;top:533px;width:762px;height:18px;background:#efefef;"></div><div style="left:87px;top:533px;width:1px;height:37px;background:#c2c2c2;"></div><div style="left:179px;top:533px;width:1px;height:37px;background:#c2c2c2;"></div><div style="left:294px;top:533px;width:1px;height:37px;background:#c2c2c2;"></div><div style="left:440px;top:533px;width:1px;height:37px;background:#c2c2c2;"></div><div style="left:529px;top:533px;width:1px;height:37px;background:#c2c2c2;"></div><div style="left:613px;top:533px;width:1px;height:37px;background:#c2c2c2;"></div><div style="left:1px;top:551px;width:762px;height:1px;background:#c2c2c2;"></div><div class="t hb" style="left:1px;top:533px;width:86px;text-align:center;box-sizing:border-box;letter-spacing:0.4px">Name</div><div class="t hb" style="left:88px;top:533px;width:91px;text-align:center;box-sizing:border-box;">X</div><div class="t hb" style="left:180px;top:533px;width:114px;text-align:center;box-sizing:border-box;">Y</div><div class="t hb" style="left:295px;top:533px;width:145px;text-align:center;box-sizing:border-box;">A</div><div class="t hb" style="left:441px;top:533px;width:88px;text-align:center;box-sizing:border-box;">B</div><div class="t hb" style="left:530px;top:533px;width:83px;text-align:center;box-sizing:border-box;">C</div><div class="t hb" style="left:614px;top:533px;width:148px;text-align:center;box-sizing:border-box;">D</div><div style="left:1px;top:552px;width:27px;height:18px;background:#efefef;"></div><div style="left:28px;top:552px;width:1px;height:18px;background:#c2c2c2;"></div><div style="left:29px;top:552px;width:58px;height:18px;background:#e3e3e3;"></div><div class="t hb" style="left:1px;top:552px;width:27px;text-align:center;box-sizing:border-box;">1</div><div class="t lb" style="left:29px;top:552px;width:58px;padding-right:3px;text-align:right;box-sizing:border-box;letter-spacing:-0.25px">Ellipse</div><div class="t vb" style="left:88px;top:552px;width:91px;padding-right:3px;text-align:right;box-sizing:border-box;"><span style="letter-spacing:1px">-</span>1.3400 in</div><div class="t vb" style="left:180px;top:552px;width:114px;padding-right:3px;text-align:right;box-sizing:border-box;">1.0000 in</div><div class="t vb" style="left:295px;top:552px;width:145px;padding-right:3px;text-align:right;box-sizing:border-box;"><span style="letter-spacing:1px">-</span>0.3400 in</div><div class="t vb" style="left:441px;top:552px;width:88px;padding-right:3px;text-align:right;box-sizing:border-box;">1.0000 in</div><div class="t vb" style="left:530px;top:552px;width:83px;padding-right:3px;text-align:right;box-sizing:border-box;"><span style="letter-spacing:1px">-</span>1.3400 in</div><div class="t vb" style="left:614px;top:552px;width:148px;padding-right:3px;text-align:right;box-sizing:border-box;">2.0000 in</div>
</div>
</div></body></html>
